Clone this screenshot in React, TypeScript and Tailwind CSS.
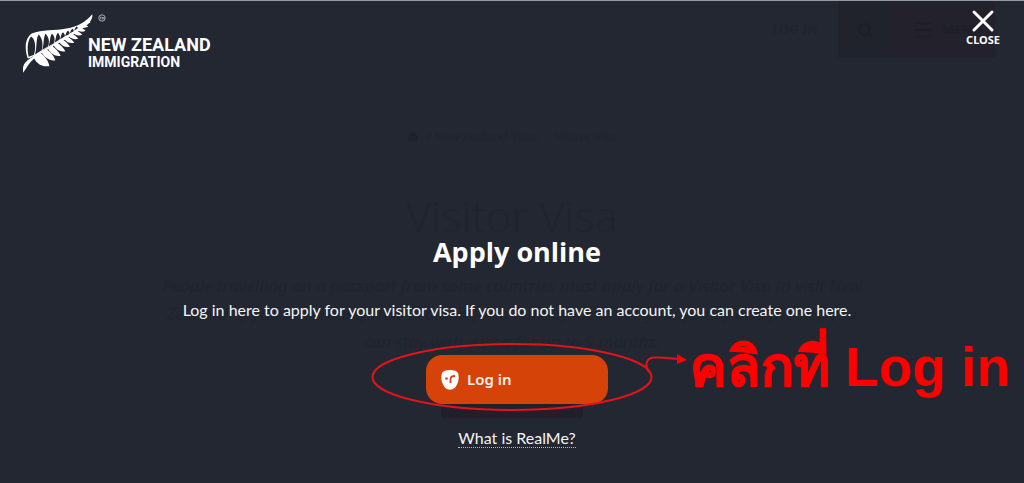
import { House, Menu, Search } from "lucide-react";

// Leaflets under the stem of the fern, from the base to the tip
const leaflets = [
  "M55 146 C60 164 78 180 103 176 C101 160 88 144 74 134 Z",
  "M80 134 C88 150 106 162 121 158 C116 143 106 132 94 125 Z",
  "M99 124 C108 140 122 148 137 145 C131 133 120 122 111 115 Z",
  "M116 113 C124 128 138 134 151 131 C145 121 135 111 127 106 Z",
  "M132 103 C140 116 152 121 165 118 C159 108 150 100 142 96 Z",
  "M147 93 C154 104 165 109 178 106 C172 97 163 90 156 87 Z",
  "M161 84 C168 94 178 97 190 94 C184 86 176 80 170 77 Z",
  "M174 75 C180 83 190 86 202 82 C196 75 188 70 182 68 Z",
  "M186 66 C192 73 201 75 212 70 C206 65 199 60 194 58 Z",
  "M198 56 C203 61 211 62 220 58 C215 54 209 50 204 49 Z",
  "M208 46 C213 50 220 49 227 45 C222 42 217 39 213 38 Z",
];

// Dark openings between the blades above the stem
const openings = [
  "M41 148 C35 124 38 99 48 87 C60 92 64 118 57 142 Z",
  "M60 141 C67 116 62 94 71 81 C81 90 86 112 80 128 Z",
  "M82 127 C88 106 84 91 92 79 C101 88 105 104 99 117 Z",
  "M101 116 C107 98 104 87 111 78 C119 86 121 97 117 107 Z",
  "M119 105 C124 91 122 83 129 76 C135 84 137 91 133 97 Z",
  "M135 95 C139 85 138 79 144 74 C150 80 151 85 148 88 Z",
  "M150 86 C154 78 153 74 159 69 C164 75 165 77 162 80 Z",
  "M164 77 C168 71 167 67 173 64 C177 69 177 71 174 73 Z",
  "M177 69 C181 64 180 61 185 57 C189 61 190 62 187 64 Z",
];

function Fern() {
  return (
    <svg viewBox="24 20 216 176" className="h-[59px] w-[72px]" aria-hidden="true">
      <path
        d="M38 152 C28 122 30 92 50 78 C82 65 120 71 154 63 C190 56 211 44 232 20 C234 35 222 52 196 67 C160 88 112 112 76 134 C52 148 42 154 38 152 Z"
        fill="#fff"
      />
      {openings.map((d) => (
        <path key={d} d={d} fill="#232731" />
      ))}
      <path
        d="M24 196 C22 175 27 165 46 152 C76 133 120 109 158 85 C190 66 216 48 232 22 C226 48 196 68 164 88 C120 114 80 135 58 152 C43 164 36 180 24 196 Z"
        fill="#fff"
      />
      {leaflets.map((d) => (
        <path key={d} d={d} fill="#fff" />
      ))}
    </svg>
  );
}

function Logo() {
  return (
    <a href="#" aria-label="New Zealand Immigration" className="flex text-white">
      <Fern />
      <span className="-ml-2 flex flex-col">
        <svg viewBox="0 0 10 10" className="ml-[11px] size-2" aria-hidden="true">
          <circle cx="5" cy="5" r="4" fill="none" stroke="#c8cad0" />
          <path d="M2.5 4h2M3.5 4v3M5.5 7V4l1 1.500l1-1.500v3" fill="none" stroke="#c8cad0" strokeWidth="0.8" />
        </svg>
        <span className="mt-3 pl-px pt-px font-[Roboto] text-[18px] font-bold leading-[20px]">NEW ZEALAND</span>
        <span className="pl-px font-[Roboto] text-[14px] font-bold leading-[14px]">IMMIGRATION</span>
      </span>
    </a>
  );
}

// The page behind the overlay, only just visible
function DimmedPage() {
  return (
    <div aria-hidden="true" className="absolute inset-0 overflow-hidden text-[#20242d]">
      <div className="flex h-[57px] items-center justify-end pr-[29px]">
        <span className="mr-5 text-[13px] font-bold">LOG IN</span>
        <span className="flex h-full w-[54px] items-center justify-center bg-[#20222c]">
          <Search size={16} strokeWidth={3} className="text-[#1c1f29]" />
        </span>
        <span className="flex h-full w-[103px] items-center gap-2 bg-[#22212c] pl-5 text-[13px] font-bold text-[#1e1e29]">
          <Menu size={22} />
          MENU
        </span>
      </div>
      <div className="flex flex-col items-center">
        <div className="mt-[70px] flex items-center gap-2 text-[12px] leading-[18px]">
          <House size={12} fill="#1e222b" />
          <span>/ New Zealand Visas</span>
          <span className="ml-2">Visitor Visa</span>
        </div>
        <p className="mt-[40px] text-[43px] font-light leading-[60px]">Visitor Visa</p>
        <p className="mt-[26px] w-[720px] text-center text-[17px] italic leading-[28px]">
          People travelling on a passport from some countries must apply for a Visitor Visa to visit New
          Zealand. If you are visiting New Zealand for a holiday, or to see your family and friends, you
          <br />
          can stay with a visa for up to 9 months.
        </p>
        <span className="mt-[14px] h-[48px] w-[142px] bg-[#221f2b]" />
      </div>
    </div>
  );
}

function RealMeIcon() {
  return (
    <svg viewBox="0 0 18 20" className="h-5 w-[18px]" aria-hidden="true">
      <path
        d="M9 0C13 0 16 1 17 3C18.500 8 17.500 13 14.500 17C11.500 20.500 6.500 20.500 3.500 17C.5 13-.5 8 1 3C2 1 5 0 9 0Z"
        fill="#fff"
      />
      <circle cx="5.500" cy="8.500" r="1.300" fill="#d64309" />
      <path d="M9.500 13V9.500C9.500 7 11 6 14 6" fill="none" stroke="#d64309" strokeWidth="1.800" />
    </svg>
  );
}

function Callout() {
  return (
    <>
      <svg
        viewBox="0 0 322 76"
        className="pointer-events-none absolute left-[-56px] top-[-15px] h-[76px] w-[322px] max-w-none"
        fill="none"
        stroke="#e0141a"
        strokeWidth="2"
        aria-hidden="true"
      >
        <ellipse cx="142" cy="37" rx="139.500" ry="33" />
        <path d="M279 32C275 27 275 18 284 17.500C291 17 298 18 307 19" />
        <path d="M307 14L317 20L307 24Z" fill="#ff0000" stroke="none" />
      </svg>
      <p
        lang="th"
        className="absolute left-[264px] top-[-18px] whitespace-nowrap font-['Liberation_Sans',sans-serif] text-[55px] font-bold leading-[60px] text-[#ff0000]"
      >
        <span className="[-webkit-text-stroke:1px_#ff0000]">คลิกที่</span> Log in
      </p>
    </>
  );
}

export default function App() {
  return (
    <main className="relative min-h-screen overflow-hidden border-t border-[#959aa3] bg-[#232731] font-['Noto_Sans',sans-serif]">
      <DimmedPage />

      <div role="dialog" aria-labelledby="apply-title" className="relative">
        <header className="flex items-start justify-between pl-[23px] pr-6">
          <div className="pt-[13px]">
            <Logo />
          </div>
          <button type="button" className="flex flex-col items-center pt-2 text-white">
            <svg viewBox="0 0 24 24" className="size-6" aria-hidden="true">
              <path d="M3 3L21 21M21 3L3 21" stroke="currentColor" strokeWidth="3" strokeLinecap="round" />
            </svg>
            <span className="text-[11px] font-bold leading-[14px]">CLOSE</span>
          </button>
        </header>

        <section className="flex flex-col items-center pl-[10px] pt-[161px] text-white">
          <h1 id="apply-title" className="font-['Open_Sans',sans-serif] text-[27px] font-bold leading-[36px]">
            Apply online
          </h1>
          <p className="mt-[30px] font-[Lato,sans-serif] text-[16px] leading-[20px] text-[#f4f5f6]">
            Log in here to apply for your visitor visa. If you do not have an account, you can create one here.
          </p>
          <div className="relative mt-[35px]">
            <button
              type="button"
              className="flex h-[49px] w-[182px] items-center gap-2 rounded-2xl bg-[#d64309] pl-[15px] text-[15px] font-semibold text-[#fdf1ea]"
            >
              <RealMeIcon />
              Log in
            </button>
            <Callout />
          </div>
          <a
            href="#"
            className="mt-6 border-b border-dotted border-[#b5b8bf] font-[Lato,sans-serif] text-[16px] leading-[19px] text-[#f4f5f6]"
          >
            What is RealMe?
          </a>
        </section>
      </div>
    </main>
  );
}
